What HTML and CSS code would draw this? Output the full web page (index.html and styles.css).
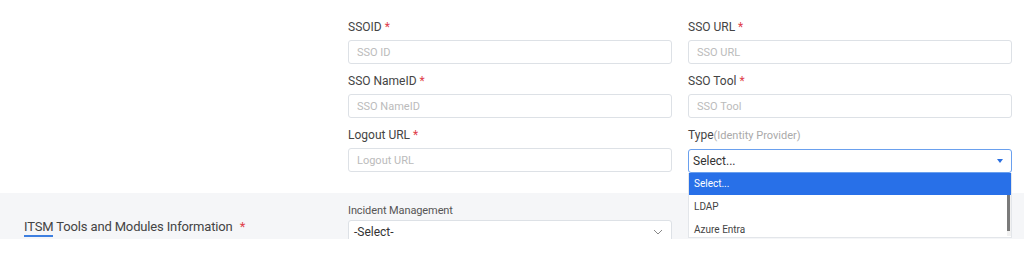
FILE: index.html
```html
<!DOCTYPE html>
<html>
<head>
    <link rel="stylesheet" href="styles.css">
</head>
<body>
<div class="page">

    <div class="section">
        <div class="section-title"></div>
        <div class="form-grid">
            <div class="field">
                <label class="field-label">SSOID <span class="req">*</span></label>
                <input class="text-input" type="text" placeholder="SSO ID">
            </div>
            <div class="field">
                <label class="field-label">SSO URL <span class="req">*</span></label>
                <input class="text-input" type="text" placeholder="SSO URL">
            </div>
            <div class="field">
                <label class="field-label">SSO NameID <span class="req">*</span></label>
                <input class="text-input" type="text" placeholder="SSO NameID">
            </div>
            <div class="field">
                <label class="field-label">SSO Tool <span class="req">*</span></label>
                <input class="text-input" type="text" placeholder="SSO Tool">
            </div>
            <div class="field">
                <label class="field-label">Logout URL <span class="req">*</span></label>
                <input class="text-input" type="text" placeholder="Logout URL">
            </div>
            <div class="field field--dropdown">
                <label class="field-label">Type<span class="hint">(Identity Provider)</span></label>
                <div class="fake-select fake-select--open">
                    <span>Select...</span>
                    <span class="caret"></span>
                </div>
                <ul class="dropdown-list">
                    <li class="dropdown-item dropdown-item--active">Select...</li>
                    <li class="dropdown-item">LDAP</li>
                    <li class="dropdown-item">Azure Entra</li>
                </ul>
                <div class="scrollbar"><div class="scrollbar__thumb"></div></div>
            </div>
        </div>
    </div>

    <div class="section section--grey">
        <div class="section-title">
            <span class="section-title__text"><span class="underline">ITSM</span> Tools and Modules Information</span>
            <span class="req">*</span>
        </div>
        <div class="form-grid">
            <div class="field">
                <label class="field-label field-label--plain">Incident Management</label>
                <div class="fake-select">
                    <span>-Select-</span>
                    <svg class="chevron" width="10" height="6" viewBox="0 0 10 6">
                        <path d="M1 1 L5 5 L9 1" fill="none" stroke="#888" stroke-width="1"/>
                    </svg>
                </div>
            </div>
        </div>
    </div>

</div>
</body>
</html>
```

FILE: styles.css
```css
html, body {
    margin: 0;
    background-color: #ffffff;
    font-family: Roboto, "Liberation Sans", Arial, sans-serif;
    color: #444;
}

.page {
    width: 1024px;
}

.section {
    display: flex;
    flex-direction: row;
    padding: 19px 12px 20px 0;
}

.section-title {
    width: 348px;
    flex-shrink: 0;
}

.form-grid {
    flex: 1;
    display: grid;
    grid-template-columns: 1fr 1fr;
    column-gap: 16px;
    row-gap: 9px;
}

.field {
    display: flex;
    flex-direction: column;
}

.field--dropdown {
    position: relative;
}

.field-label {
    font-size: 12px;
    line-height: 16px;
    color: #444;
    margin-bottom: 5px;
}

.field-label--plain {
    color: #555;
    font-size: 11px;
    letter-spacing: -0.1px;
    margin-bottom: 1px;
}

.req {
    color: #e0404a;
}

.hint {
    color: #aaa;
    font-size: 11px;
}

.text-input {
    box-sizing: border-box;
    height: 24px;
    border: 1px solid #dde1e6;
    border-radius: 3px;
    padding: 0 8px;
    font-family: inherit;
    font-size: 11px;
    color: #444;
    background: #fff;
    outline: none;
}

.text-input::placeholder {
    color: #bbb;
}

.fake-select {
    box-sizing: border-box;
    height: 24px;
    border: 1px solid #dde1e6;
    border-radius: 3px;
    padding: 0 8px 0 5px;
    font-size: 12px;
    color: #333;
    background: #fff;
    display: flex;
    align-items: center;
    justify-content: space-between;
}

.fake-select--open {
    border-color: #6aa0ee;
    padding-left: 4px;
}

.caret {
    width: 0;
    height: 0;
    border-left: 3px solid transparent;
    border-right: 3px solid transparent;
    border-top: 4px solid #2a6fe0;
}

.dropdown-list {
    position: absolute;
    top: 46px;
    left: 0;
    right: 0;
    height: 64px;
    overflow: hidden;
    margin: 0;
    padding: 0;
    list-style: none;
    background: #fff;
    border: 1px solid #e3e6ea;
    border-top: none;
    z-index: 5;
}

.dropdown-item {
    height: 23px;
    line-height: 23px;
    padding-left: 5px;
    font-size: 10px;
    color: #444;
}

.dropdown-item--active {
    height: 22px;
    line-height: 22px;
    background-color: #2870e8;
    color: #fff;
}

.scrollbar {
    position: absolute;
    top: 68px;
    right: 1px;
    width: 4px;
    height: 41px;
    background: #f1f1f1;
    z-index: 6;
}

.scrollbar__thumb {
    width: 3px;
    height: 36px;
    background: #7a7a7a;
}

.section--grey {
    background-color: #f5f6f8;
    height: 46px;
    box-sizing: border-box;
    padding: 10px 12px 0 0;
    overflow: hidden;
}

.section--grey .section-title {
    padding: 15px 0 0 24px;
    box-sizing: border-box;
    font-size: 13px;
    line-height: 17px;
    letter-spacing: -0.15px;
    color: #444;
}

.section-title__text {
    margin-right: 4px;
}

.underline {
    display: inline-block;
    border-bottom: 2px solid #3d7fe0;
    line-height: 16px;
}
```
